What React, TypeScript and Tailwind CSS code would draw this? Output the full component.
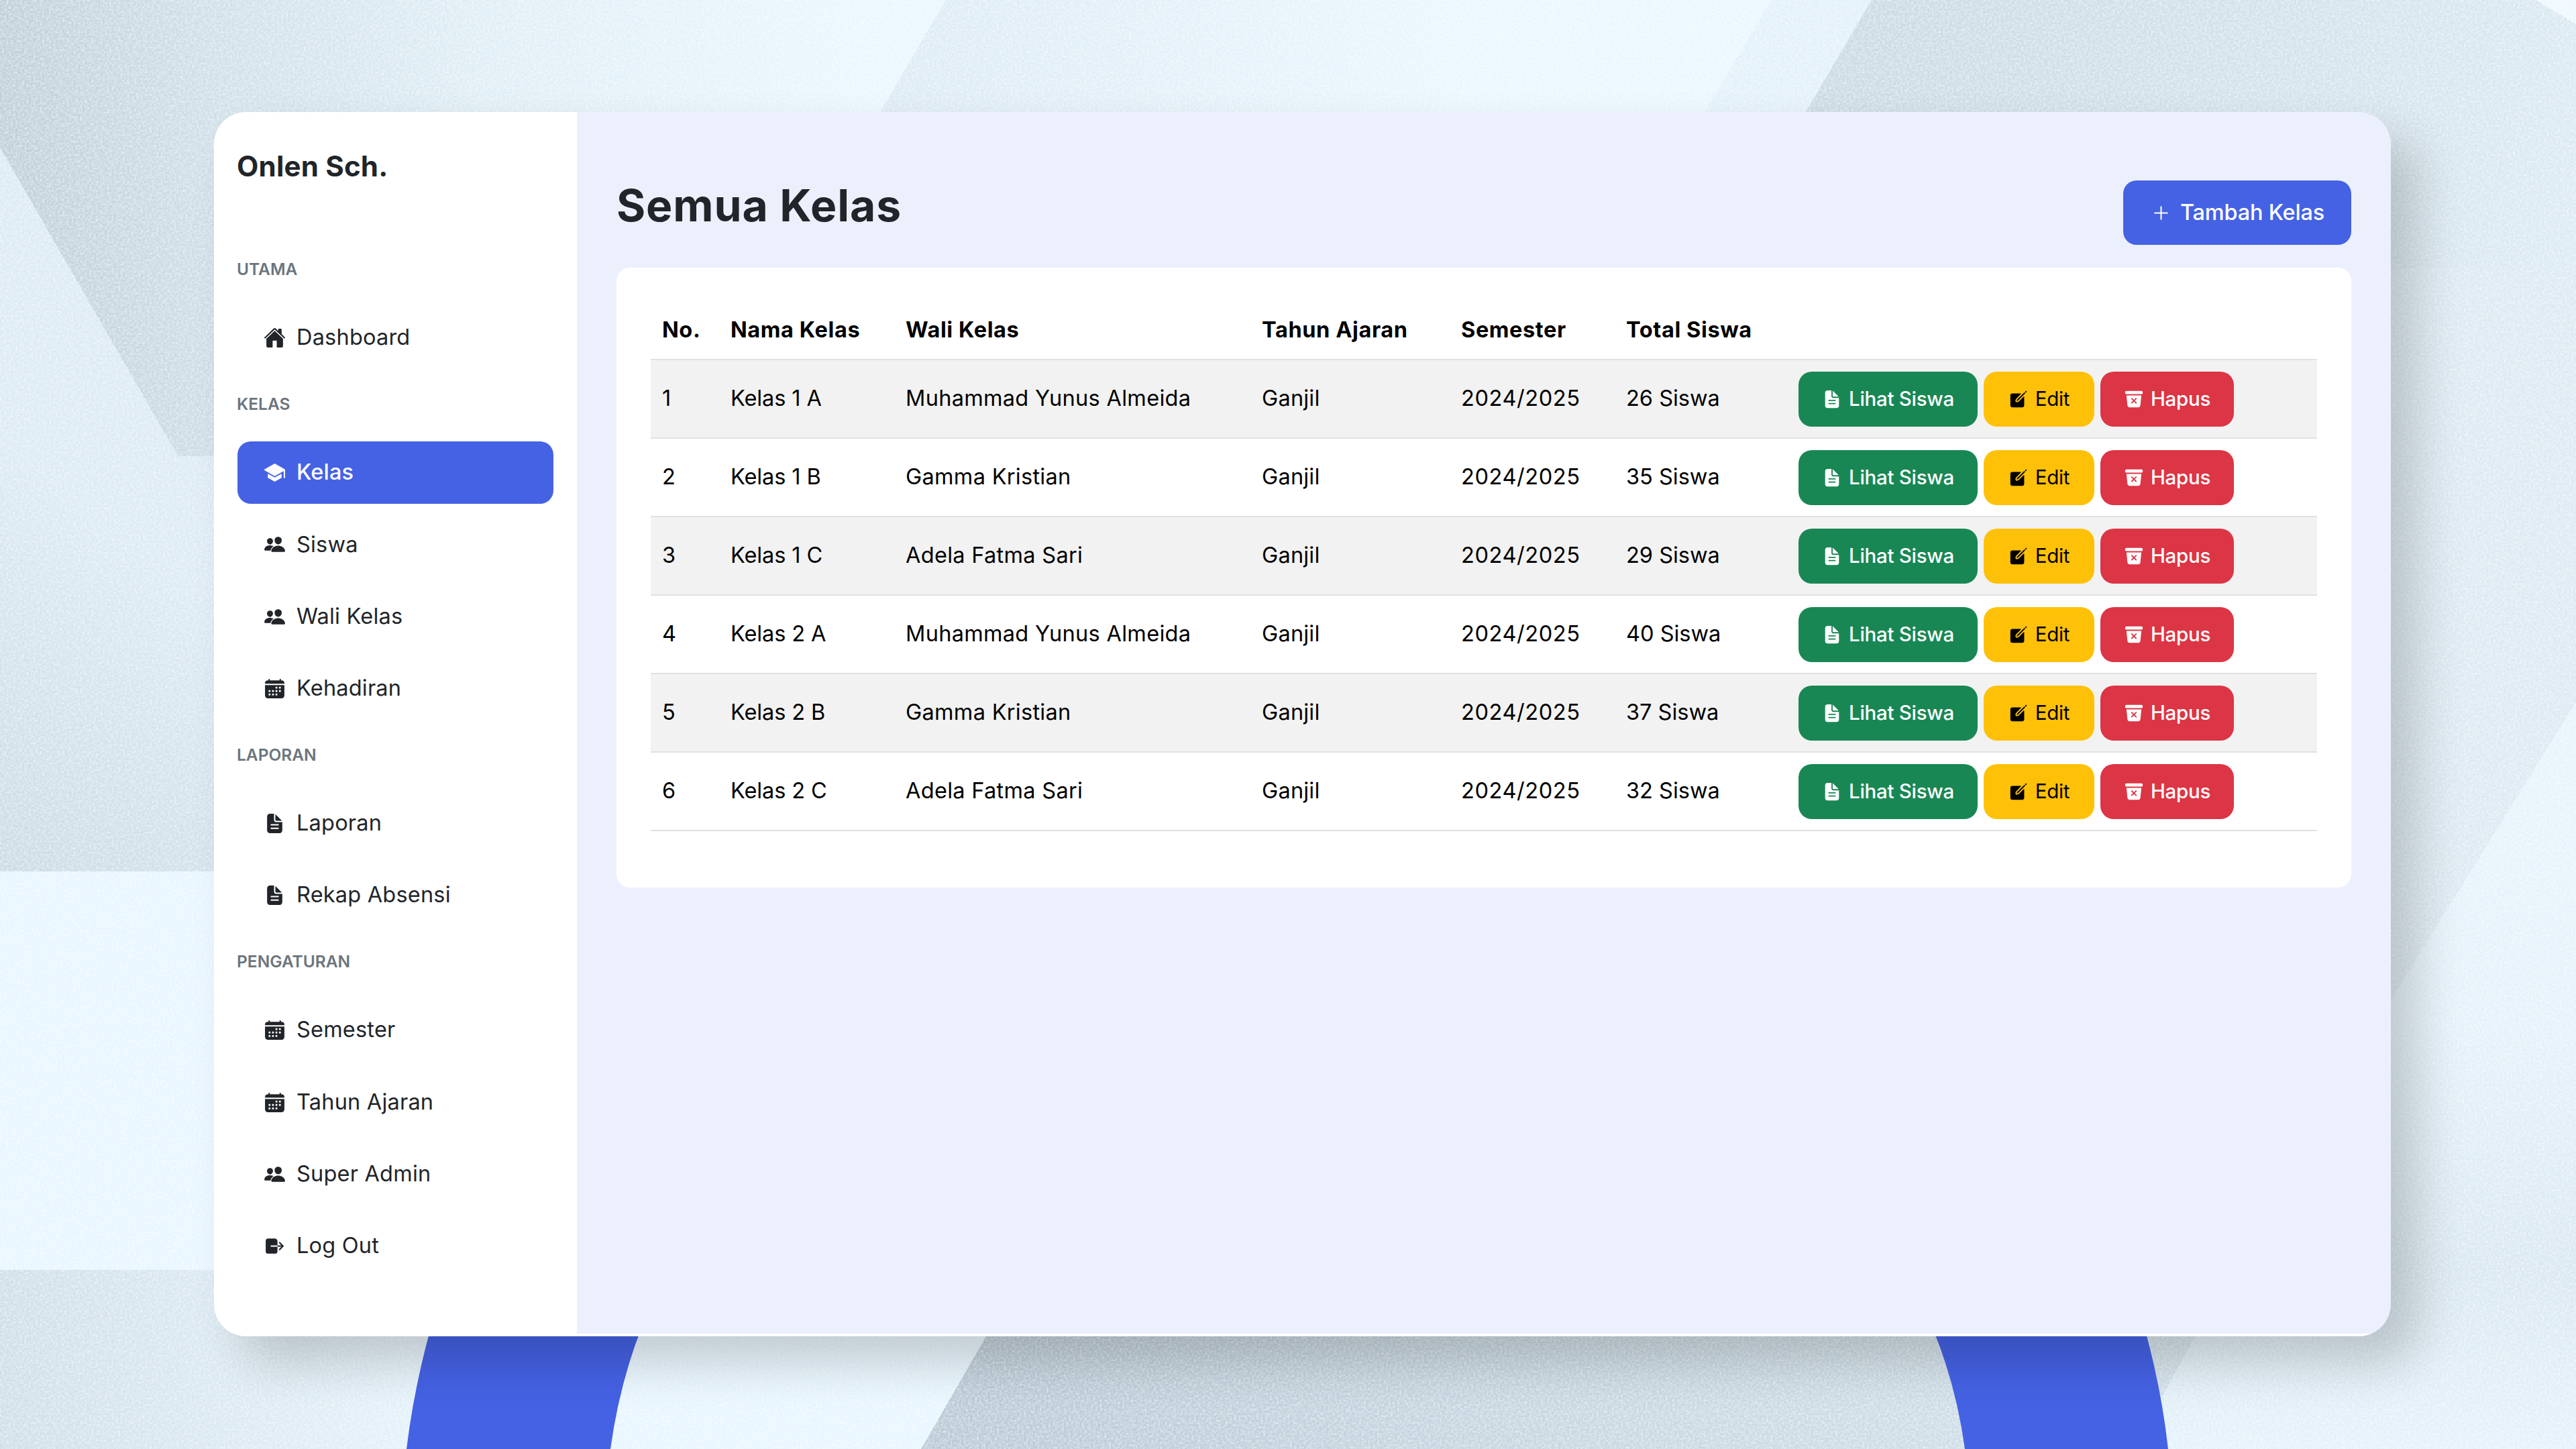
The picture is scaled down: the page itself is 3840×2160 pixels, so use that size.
import type { IconType } from "react-icons";
import {
  IoAdd,
  IoCalendar,
  IoCreate,
  IoDocumentText,
  IoHome,
  IoLogOut,
  IoPeople,
  IoSchool,
  IoTrashBin,
} from "react-icons/io5";

type MenuItem = {
  label: string;
  icon: IconType;
  active?: boolean;
};

type MenuGroup = {
  title: string;
  items: MenuItem[];
};

const menu: MenuGroup[] = [
  { title: "Utama", items: [{ label: "Dashboard", icon: IoHome }] },
  {
    title: "Kelas",
    items: [
      { label: "Kelas", icon: IoSchool, active: true },
      { label: "Siswa", icon: IoPeople },
      { label: "Wali Kelas", icon: IoPeople },
      { label: "Kehadiran", icon: IoCalendar },
    ],
  },
  {
    title: "Laporan",
    items: [
      { label: "Laporan", icon: IoDocumentText },
      { label: "Rekap Absensi", icon: IoDocumentText },
    ],
  },
  {
    title: "Pengaturan",
    items: [
      { label: "Semester", icon: IoCalendar },
      { label: "Tahun Ajaran", icon: IoCalendar },
      { label: "Super Admin", icon: IoPeople },
      { label: "Log Out", icon: IoLogOut },
    ],
  },
];

const classes = [
  { name: "Kelas 1 A", teacher: "Muhammad Yunus Almeida", total: 26 },
  { name: "Kelas 1 B", teacher: "Gamma Kristian", total: 35 },
  { name: "Kelas 1 C", teacher: "Adela Fatma Sari", total: 29 },
  { name: "Kelas 2 A", teacher: "Muhammad Yunus Almeida", total: 40 },
  { name: "Kelas 2 B", teacher: "Gamma Kristian", total: 37 },
  { name: "Kelas 2 C", teacher: "Adela Fatma Sari", total: 32 },
];

function Backdrop() {
  return (
    <svg className="absolute inset-0 size-full" viewBox="0 0 3840 2160" preserveAspectRatio="none">
      <defs>
        <linearGradient id="topLeft" gradientUnits="userSpaceOnUse" x1="0" y1="100" x2="1300" y2="0">
          <stop offset="0" stopColor="#bfd0da" />
          <stop offset="0.25" stopColor="#d0e0e9" />
          <stop offset="0.55" stopColor="#dfeef6" />
          <stop offset="1" stopColor="#e9f7ff" />
        </linearGradient>
        <linearGradient id="left" gradientUnits="userSpaceOnUse" x1="0" y1="1300" x2="320" y2="900">
          <stop offset="0" stopColor="#cbdbe5" />
          <stop offset="0.5" stopColor="#d3e3ec" />
          <stop offset="1" stopColor="#dcebf4" />
        </linearGradient>
        <linearGradient id="topMiddle" gradientUnits="userSpaceOnUse" x1="1330" y1="0" x2="2200" y2="0">
          <stop offset="0" stopColor="#dcebf4" />
          <stop offset="1" stopColor="#e9f7ff" />
        </linearGradient>
        <linearGradient id="topRight" gradientUnits="userSpaceOnUse" x1="2700" y1="0" x2="3840" y2="400">
          <stop offset="0" stopColor="#c9dae3" />
          <stop offset="0.6" stopColor="#d3e3ec" />
          <stop offset="1" stopColor="#dcebf4" />
        </linearGradient>
        <linearGradient id="right" gradientUnits="userSpaceOnUse" x1="0" y1="1100" x2="0" y2="2160">
          <stop offset="0" stopColor="#e6f4fc" />
          <stop offset="0.4" stopColor="#e4f2fb" />
          <stop offset="0.75" stopColor="#d9e8f1" />
          <stop offset="1" stopColor="#e4f2fb" />
        </linearGradient>
        <linearGradient id="bottomLeft" gradientUnits="userSpaceOnUse" x1="0" y1="0" x2="600" y2="0">
          <stop offset="0" stopColor="#cfdfe8" />
          <stop offset="1" stopColor="#e3f1fa" />
        </linearGradient>
        <linearGradient id="bottom" gradientUnits="userSpaceOnUse" x1="1400" y1="0" x2="3200" y2="0">
          <stop offset="0" stopColor="#b9cad6" />
          <stop offset="0.5" stopColor="#c6d7e1" />
          <stop offset="1" stopColor="#d0e0e9" />
        </linearGradient>
        <filter id="grain" x="0" y="0" width="100%" height="100%">
          <feTurbulence type="fractalNoise" baseFrequency="0.3" numOctaves="2" seed="4" />
          <feColorMatrix values="0 0 0 0 1  0 0 0 0 1  0 0 0 0 1  2 0 0 0 -0.7" />
        </filter>
      </defs>
      <rect width="3840" height="2160" fill="#e7f6ff" />
      <path d="M0 0H1410L1310 170V680H265L0 220Z" fill="url(#topLeft)" />
      <path d="M0 220L265 680H330V1299H0Z" fill="url(#left)" />
      <path d="M1410 0H2640L2540 170H1310Z" fill="url(#topMiddle)" />
      <path d="M2640 0H2790L2690 170H2540Z" fill="#e2f1fa" />
      <path d="M2790 0H3840V1047L3560 1497V240L3400 170H2690Z" fill="url(#topRight)" />
      <path d="M3780 0H3840V36Z" fill="#eef8fe" />
      <path d="M3540 400H3840V1047L3540 1529Z" fill="#dceaf3" />
      <path d="M3840 1047V2160H3180L3272 1980L3560 1900V1497Z" fill="url(#right)" />
      <path d="M0 1893H330L680 1980V2160H0Z" fill="url(#bottomLeft)" />
      <path d="M1477 1980H3279L3180 2160H1373Z" fill="url(#bottom)" />
      <rect width="3840" height="2160" filter="url(#grain)" opacity="0.55" />
      <path d="M642 1980Q617 2070 606 2160H910Q923 2065 956 1980Z" fill="#4562e4" />
      <path d="M2881 1980Q2916 2065 2929 2160H3232Q3222 2070 3197 1980Z" fill="#4562e4" />
    </svg>
  );
}

function Sidebar() {
  return (
    <aside className="w-[541px] shrink-0 bg-white px-[34px] pt-[51px]">
      <div className="h-[150px] text-[42px] leading-[60px] font-bold tracking-[0.2px]">Onlen Sch.</div>
      {menu.map((group) => (
        <section key={group.title} className="mb-3">
          <h2 className="h-[82px] pt-[14px] text-[24.5px] leading-[38px] font-semibold text-[#6c757d] uppercase">
            {group.title}
          </h2>
          <ul>
            {group.items.map(({ label, icon: Icon, active }) => (
              <li key={label} className="h-[107.2px] pt-[7px]">
                <a
                  className={`mx-px flex h-[93px] items-center gap-[16px] rounded-[20px] pl-[39px] text-[32.5px] tracking-[0.2px] ${
                    active ? "bg-[#4562e4] font-medium text-white" : ""
                  }`}
                >
                  <Icon className="size-[33px]" />
                  {label}
                </a>
              </li>
            ))}
          </ul>
        </section>
      ))}
    </aside>
  );
}

function RowActions() {
  return (
    <div className="flex gap-[9px] text-[29.5px] font-medium tracking-[-0.3px]">
      <button className="flex h-[82px] w-[267px] items-center justify-center gap-[10px] rounded-[20px] bg-[#198754] text-white">
        <IoDocumentText className="size-[30px]" />
        Lihat Siswa
      </button>
      <button className="flex h-[82px] w-[165px] items-center justify-center gap-[10px] rounded-[20px] bg-[#ffc107] font-normal text-black">
        <IoCreate className="size-[30px]" />
        Edit
      </button>
      <button className="flex h-[82px] w-[199px] items-center justify-center gap-[10px] rounded-[20px] bg-[#dc3545] text-white">
        <IoTrashBin className="size-[30px]" />
        Hapus
      </button>
    </div>
  );
}

function ClassTable() {
  return (
    <table className="w-full table-fixed text-left text-[32.5px] tracking-[0.2px] text-black">
      <colgroup>
        <col className="w-[102px]" />
        <col className="w-[261px]" />
        <col className="w-[531px]" />
        <col className="w-[297px]" />
        <col className="w-[246px]" />
        <col className="w-[257px]" />
        <col />
      </colgroup>
      <thead>
        <tr className="h-[86px] border-b-2 border-[#dee2e6]">
          {["No.", "Nama Kelas", "Wali Kelas", "Tahun Ajaran", "Semester", "Total Siswa", ""].map((title) => (
            <th key={title} className="pl-[17px] font-bold tracking-[0.6px] whitespace-nowrap">
              {title}
            </th>
          ))}
        </tr>
      </thead>
      <tbody>
        {classes.map((item, index) => (
          <tr key={item.name} className="h-[117px] border-b-2 border-[#dee2e6] odd:bg-[#f2f2f2]">
            <td className="pl-[17px]">{index + 1}</td>
            <td className="pl-[17px] tracking-[-0.1px]">{item.name}</td>
            <td className="pl-[17px] tracking-[0.3px]">{item.teacher}</td>
            <td className="pl-[17px]">Ganjil</td>
            <td className="pl-[17px] tracking-[0.6px]">2024/2025</td>
            <td className="pl-[17px] tracking-normal">{item.total} Siswa</td>
            <td className="pl-[17px]">
              <RowActions />
            </td>
          </tr>
        ))}
      </tbody>
    </table>
  );
}

export default function App() {
  return (
    <div className="relative h-[2160px] w-[3840px] overflow-hidden pt-[167px] pl-[319px] font-['Inter',sans-serif] text-[#212529]">
      <Backdrop />
      <div className="relative flex h-[1825px] w-[3245px] overflow-hidden rounded-[48px] bg-[#ecf0fd] shadow-[40px_40px_70px_rgba(0,0,0,0.18)]">
        <Sidebar />
        <main className="flex-1 border-b-4 border-white px-[59px] pt-[102px]">
          <header className="flex h-[130px] justify-between">
            <h1 className="text-[66px] leading-[74px] font-bold tracking-[0.9px]">Semua Kelas</h1>
            <button className="flex h-[96px] w-[340px] items-center justify-center gap-[12px] rounded-[20px] bg-[#4562e4] text-[32.5px] font-medium tracking-[-0.2px] text-white">
              <IoAdd className="size-[33px]" />
              Tambah Kelas
            </button>
          </header>
          <div className="h-[924px] rounded-[20px] bg-white px-[51px] pt-[51px]">
            <ClassTable />
          </div>
        </main>
      </div>
    </div>
  );
}
